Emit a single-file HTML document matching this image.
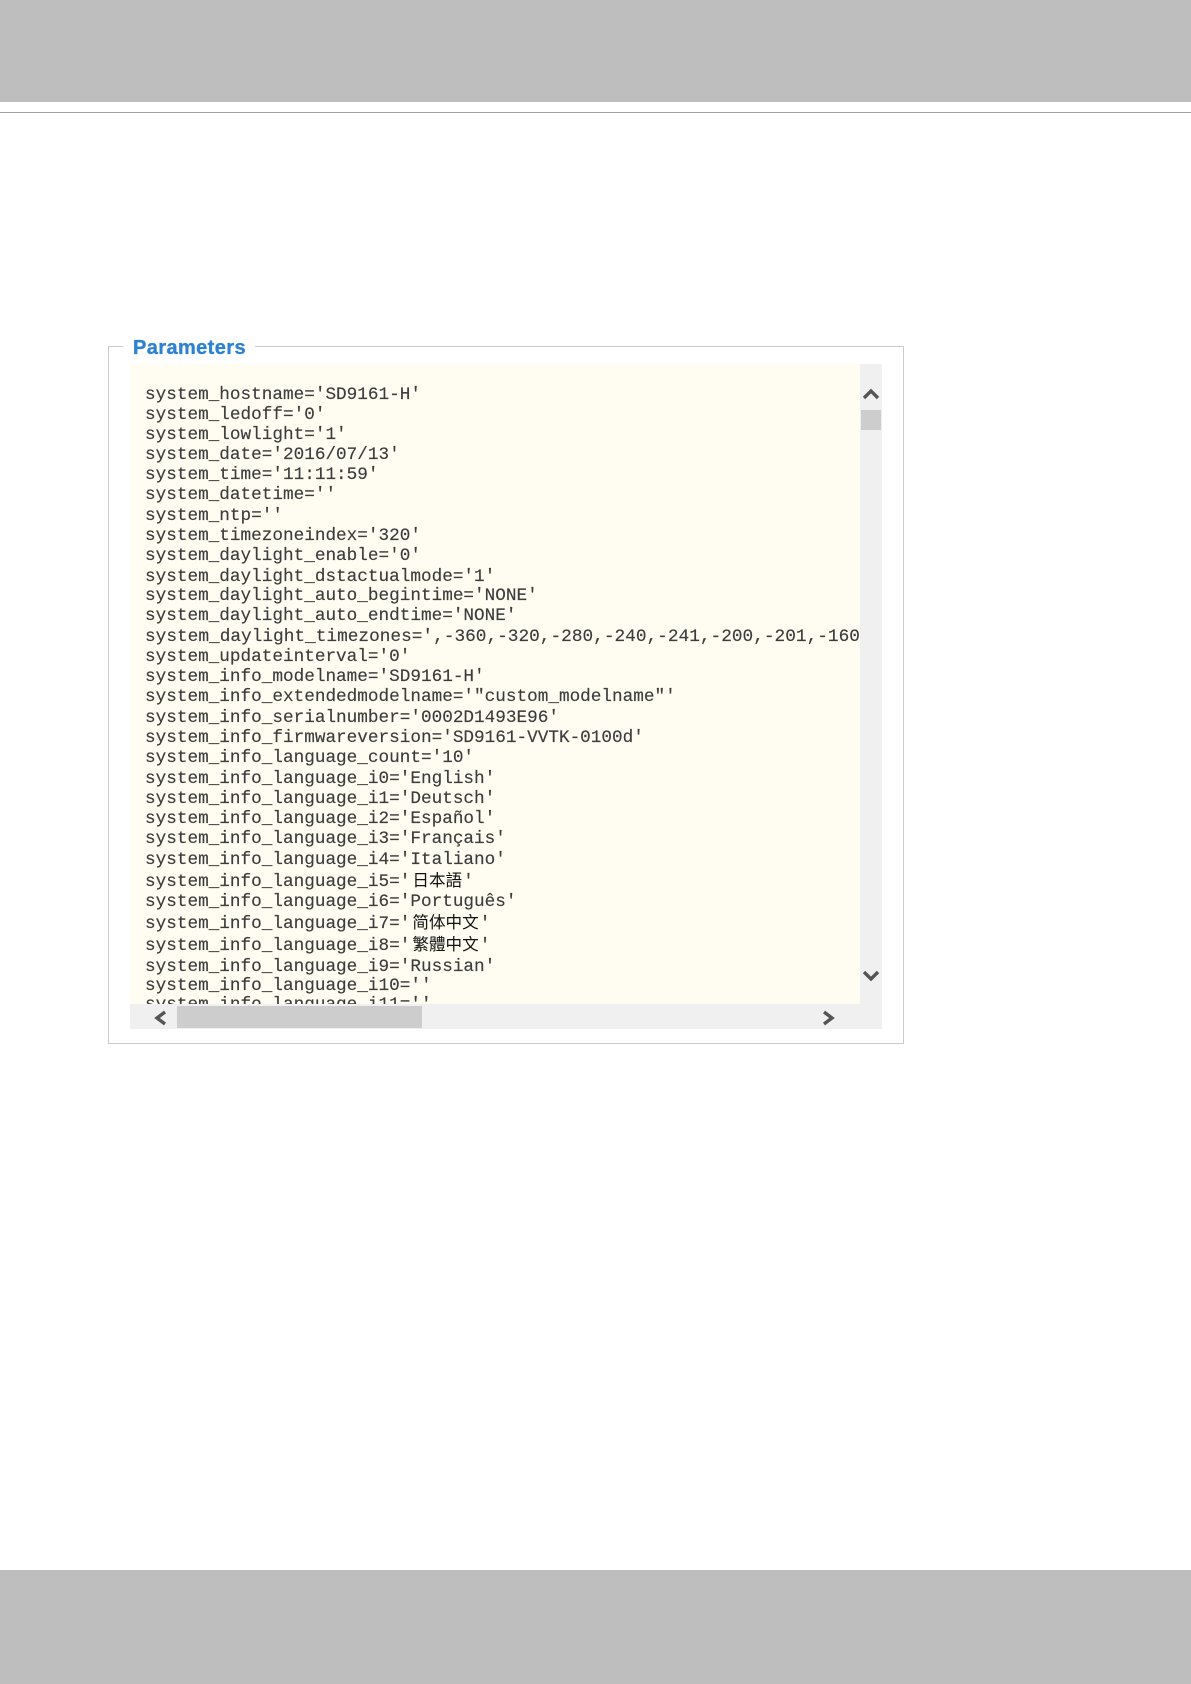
<!DOCTYPE html>
<html lang="en">
<head>
<meta charset="utf-8">
<title>Parameters</title>
<style>
html,body{margin:0;padding:0;background:#fff}
body{position:relative;width:1191px;height:1684px;overflow:hidden;font-family:"Liberation Sans",sans-serif}
.band{position:absolute;left:0;width:1191px;background:#bebebe}
.rule{position:absolute;left:0;top:112px;width:1191px;height:1px;background:#a0a0a0}
.fs{position:absolute;left:108px;top:345.5px;width:796px;height:698px;border:1.5px solid #cacaca;box-sizing:border-box}
.legend{position:absolute;left:123px;top:336px;width:132px;height:24px;background:#fff}
.legend span{position:absolute;left:10px;top:0;font-weight:bold;font-size:20px;line-height:24px;letter-spacing:.4px;color:#2f82d2;white-space:nowrap;-webkit-text-stroke:.35px #2f82d2;filter:blur(.3px)}
.ta{position:absolute;left:130px;top:364px;width:730px;height:640px;background:#fffdf2;overflow:hidden}
.ta div{position:absolute;left:15px;height:20px;line-height:20px;font-family:"Liberation Mono","Noto Sans CJK TC",monospace;font-size:17.7px;color:#3c3c3c;white-space:pre;-webkit-text-stroke:.15px #3c3c3c;filter:blur(.3px)}
.ta b{font-family:"Noto Sans CJK TC",sans-serif;font-weight:400;color:#111;font-size:16.6px;margin:0 1px 0 2px;-webkit-text-stroke:0}
.vt{position:absolute;left:860px;top:364px;width:22px;height:665px;background:#f0f0f0}
.ht{position:absolute;left:130px;top:1004px;width:752px;height:25px;background:#f0f0f0}
.vth{position:absolute;left:861px;top:410px;width:20px;height:20px;background:#cdcdcd}
.hth{position:absolute;left:177px;top:1006px;width:245px;height:22px;background:#cdcdcd}
svg{position:absolute;overflow:visible}
</style>
</head>
<body>
<div class="band" style="top:0;height:102px"></div>
<div class="rule"></div>
<div class="fs"></div>
<div class="legend"><span>Parameters</span></div>
<div class="vt"></div>
<div class="ht"></div>
<div class="ta">
<div style="top:21px">system_hostname='SD9161-H'</div>
<div style="top:41px">system_ledoff='0'</div>
<div style="top:61px">system_lowlight='1'</div>
<div style="top:81px">system_date='2016/07/13'</div>
<div style="top:101px">system_time='11:11:59'</div>
<div style="top:121px">system_datetime=''</div>
<div style="top:142px">system_ntp=''</div>
<div style="top:162px">system_timezoneindex='320'</div>
<div style="top:182px">system_daylight_enable='0'</div>
<div style="top:203px">system_daylight_dstactualmode='1'</div>
<div style="top:222px">system_daylight_auto_begintime='NONE'</div>
<div style="top:242px">system_daylight_auto_endtime='NONE'</div>
<div style="top:263px;font-size:17.8px">system_daylight_timezones=',-360,-320,-280,-240,-241,-200,-201,-160,-120,-80</div>
<div style="top:283px">system_updateinterval='0'</div>
<div style="top:303px">system_info_modelname='SD9161-H'</div>
<div style="top:323px">system_info_extendedmodelname='"custom_modelname"'</div>
<div style="top:344px">system_info_serialnumber='0002D1493E96'</div>
<div style="top:364px">system_info_firmwareversion='SD9161-VVTK-0100d'</div>
<div style="top:384px">system_info_language_count='10'</div>
<div style="top:405px">system_info_language_i0='English'</div>
<div style="top:425px">system_info_language_i1='Deutsch'</div>
<div style="top:445px">system_info_language_i2='Español'</div>
<div style="top:465px">system_info_language_i3='Français'</div>
<div style="top:486px">system_info_language_i4='Italiano'</div>
<div style="top:505px">system_info_language_i5='<b>日本語</b>'</div>
<div style="top:528px">system_info_language_i6='Português'</div>
<div style="top:547px">system_info_language_i7='<b>简体中文</b>'</div>
<div style="top:569px">system_info_language_i8='<b>繁體中文</b>'</div>
<div style="top:593px">system_info_language_i9='Russian'</div>
<div style="top:612px">system_info_language_i10=''</div>
<div style="top:631px">system_info_language_i11=''</div>
</div>
<div class="vth"></div>
<div class="hth"></div>
<svg style="left:0;top:0;filter:blur(.3px)" width="1191" height="1684" fill="none" stroke="#555" stroke-width="3.4">
<path d="M864 398 L871 391 L878 398"/>
<path d="M864 972 L871 979 L878 972"/>
<path d="M165 1012 L157 1018 L165 1024"/>
<path d="M824 1012 L832 1018 L824 1024"/>
</svg>
<div class="band" style="top:1570px;height:114px"></div>
</body>
</html>
